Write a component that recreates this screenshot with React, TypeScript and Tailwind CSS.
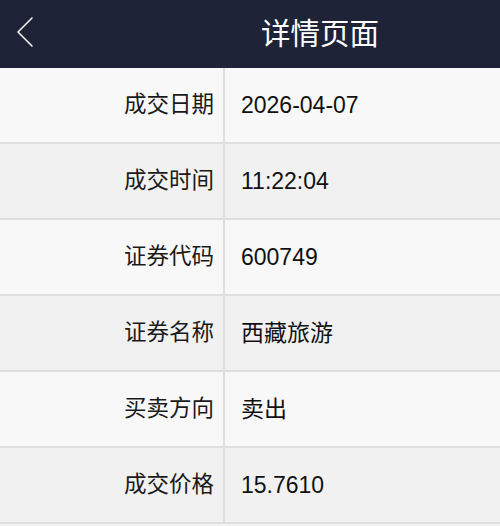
import React from "react";

const rows: [string, string][] = [
  ["成交日期", "2026-04-07"],
  ["成交时间", "11:22:04"],
  ["证券代码", "600749"],
  ["证券名称", "西藏旅游"],
  ["买卖方向", "卖出"],
  ["成交价格", "15.7610"],
];

export default function App() {
  return (
    <div
      className="w-[500px] h-[526px] overflow-hidden bg-[#f2f2f2]"
      style={{ fontFamily: '"Liberation Sans", "Noto Sans CJK SC", sans-serif' }}
    >
      <div className="h-[68px] bg-[#1e2337] flex items-center relative">
        <svg
          className="absolute left-[15px] top-[16px]"
          width="20"
          height="32"
          viewBox="0 0 20 32"
          fill="none"
        >
          <path d="M17 2 L3 16 L17 30" stroke="#ffffff" strokeWidth="1.5" strokeLinecap="round" strokeLinejoin="round" />
        </svg>
        <div className="pl-[261px] text-white text-[29.5px] leading-none">详情页面</div>
      </div>
      <div className="flex flex-col">
        {rows.map(([k, v], i) => (
          <div
            key={k}
            className={`flex h-[76px] border-b-2 border-[#dedede] ${i % 2 === 0 ? "bg-[#f8f8f8]" : "bg-[#f1f1f1]"}`}
          >
            <div className="w-[223px] flex items-center justify-end pr-[9px] text-[22.5px] text-[#1a1a1a]">{k}</div>
            <div className="w-[2px] bg-[#dedede]" />
            <div className="flex-1 flex items-center pl-[16px] text-[23px] text-[#111]">{v}</div>
          </div>
        ))}
      </div>
    </div>
  );
}
